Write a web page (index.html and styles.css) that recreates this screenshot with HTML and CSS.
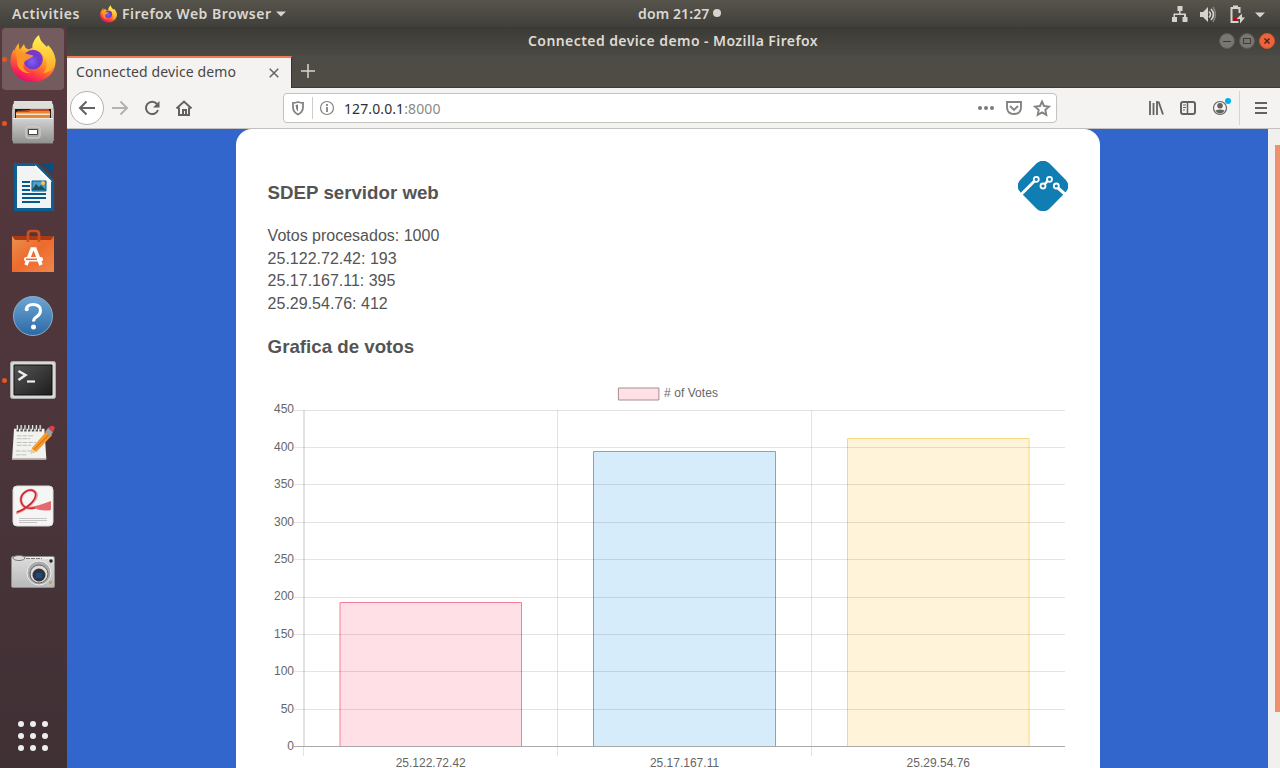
FILE: index.html
```html
<!DOCTYPE html>
<html lang="es">
<head>
<meta charset="utf-8">
<title>Connected device demo</title>
<link rel="stylesheet" href="styles.css">
</head>
<body>
<svg class="defs" width="0" height="0">
  <defs>
    <linearGradient id="fxbody" x1=".8" y1="0" x2=".25" y2="1"><stop offset="0" stop-color="#fff44f"/><stop offset=".3" stop-color="#ffbd27"/><stop offset=".58" stop-color="#ff6a2c"/><stop offset=".82" stop-color="#fa2751"/><stop offset="1" stop-color="#df0080"/></linearGradient>
    <radialGradient id="fxglobe" cx=".45" cy=".6" r=".65"><stop offset="0" stop-color="#8758ff"/><stop offset=".55" stop-color="#6540cd"/><stop offset="1" stop-color="#9b2bc4"/></radialGradient>
    <linearGradient id="fxtail" x1="0" y1="0" x2="0" y2="1"><stop offset="0" stop-color="#fff44f"/><stop offset="1" stop-color="#ffa52a"/></linearGradient>
    <linearGradient id="metal" x1="0" y1="0" x2="0" y2="1"><stop offset="0" stop-color="#d4d3d1"/><stop offset="1" stop-color="#8f8f8d"/></linearGradient>
    <linearGradient id="orange" x1="0" y1="0" x2="1" y2="1"><stop offset="0" stop-color="#e8914f"/><stop offset=".5" stop-color="#ee6a2c"/><stop offset="1" stop-color="#f0874f"/></linearGradient>
    <linearGradient id="help" x1="0" y1="0" x2="0" y2="1"><stop offset="0" stop-color="#6da7d5"/><stop offset="1" stop-color="#2c68a4"/></linearGradient>
    <linearGradient id="term" x1="0" y1="0" x2="1" y2="1"><stop offset="0" stop-color="#555"/><stop offset="1" stop-color="#1d1d1d"/></linearGradient>
    <linearGradient id="cam" x1="0" y1="0" x2="0" y2="1"><stop offset="0" stop-color="#ddd"/><stop offset="1" stop-color="#b9b9b9"/></linearGradient>
    <symbol id="firefox" viewBox="0 0 46 48">
      <path d="M9 8c-.5 3 0 5 1 6.500l4-5.500c.5 3 2 5 5 5.500 2-1.500 4-2 6-2 6-1 13 0 18 6 2 3 3 6 2.500 9C45 39 35 47 23 47 10 47 .5 38 .5 26c0-5 1.500-9 3.500-12l.5 2C5 13 6.500 11 9 8z" fill="url(#fxbody)"/>
      <path d="M29 0c1 6 4 8 8 12l1-2c6 6 8 12 7 18-2 7-7 10-12 10 4-4 5-10 2-15-2-4-6-7-12-8-2-5 1-11 6-15z" fill="url(#fxtail)"/>
      <circle cx="23" cy="24.500" r="9.800" fill="url(#fxglobe)"/>
      <path d="M6 17c5-1 9 2 15 3 2 0 3 1 1 2l-5 3c-2 1-3 2-3 4-2 5 2 8 7 9-8 1-14-4-14-12 0-4-1-6-1-9z" fill="#ff9727" opacity=".95"/>
    </symbol>
  </defs>
</svg>
<header class="topbar">
  <span class="activities">Activities</span>
  <svg class="topfox" width="17" height="18"><use href="#firefox"/></svg>
  <span class="appname">Firefox Web Browser</span>
  <svg class="caret" width="10" height="6"><path d="M0 .5h10L5 5.500z" fill="#d5d3cf"/></svg>
  <span class="clock">dom 21:27</span><i class="notice"></i>
  <svg class="tray" width="100" height="24" viewBox="0 0 100 24">
    <g fill="#d5d3cf">
      <path d="M10.500 4h5v5h-2v2.500h5.500v3.500h1.500v5h-5v-5h1.500v-2H8v2h2v5H5v-5h1.500v-3.500H12V9h-1.500z"/>
      <path d="M33 10h3l5-5v15l-5-5h-3z"/>
      <path d="M42 9.500q3 3 0 6M44 7q5 5.500 0 11" fill="none" stroke="#d5d3cf" stroke-width="1.600"/>
      <path d="M46 5q5 7.500 0 15" fill="none" stroke="#85837d" stroke-width="1.500"/>
      <path d="M63.500 5h2.500V3.500h5V5h2.500v6h-2V7h-6v12h6v2h-8z"/>
      <path d="M66.500 16h4v2.500h-4z" fill="#d00000"/>
      <path d="M75 11.500l-5.500 5.500h3.500v4.500l5-6h-3z"/>
      <path d="M88 10.500h10l-5 5z"/>
    </g>
  </svg>
</header>
<div class="workspace">
  <nav class="dock">
    <div class="app active running"><svg width="46" height="48"><use href="#firefox"/></svg></div>
    <div class="app running"><svg width="44" height="46" viewBox="0 0 44 46">
      <path d="M2 4h40l1 7v30H1V11z" fill="url(#metal)"/><path d="M3 1h38l1 7H2z" fill="#dededb"/><path d="M4 9h36v9H4z" fill="#2b1a14"/><path d="M6 11l12-1 2-1h18v4H6z" fill="#c6481a"/><path d="M5 12h13l1-1h20v7H5z" fill="#e88436"/><path d="M5 13.500h34V15H5z" fill="#fce1be"/>
      <path d="M2 18h40v26H2z" fill="url(#metal)"/><path d="M2 18.500h40" stroke="#eee"/><rect x="15" y="27" width="14" height="11" rx="2" fill="#aaa" stroke="#d7d7d7"/><path d="M17.500 29.500h9v5h-9z" fill="#fff" stroke="#444"/><path d="M2 43.500h40" stroke="#666"/>
    </svg></div>
    <div class="app"><svg width="41" height="48" viewBox="0 0 41 48">
      <path d="M1 0h23l17 17v31H1z" fill="#0b5f92"/><path d="M28 0h13v12z" fill="#045083"/><path d="M4 3h18l16 15v27H4z" fill="#f2f3f3"/><path d="M22 3l16 16" stroke="#fff" stroke-width="2"/>
      <path d="M9 19h8m-8 4h8m-8 4h8m-8 4h24m-24 4h24m-24 4h18" stroke="#045b8b" stroke-width="2"/><path d="M19 18h14v10H19z" fill="#4aa0cf" stroke="#045b8b"/><path d="M19 27l4-6 3 3 2-2 5 5z" fill="#244f50"/><circle cx="30" cy="20" r="2" fill="#fbc43a"/>
    </svg></div>
    <div class="app"><svg width="42" height="44" viewBox="0 0 42 44">
      <path d="M0 7h42v5H0z" fill="#a83a14"/><path d="M0 7l3 4h36l3-4v36H0z" fill="url(#orange)"/><path d="M16 13V5q0-3 3-3h5q3 0 3 3v8" fill="none" stroke="#d04f1f" stroke-width="2.700"/>
      <path d="M14 36l6-16h3l6 16" fill="none" stroke="#fff" stroke-width="3.600"/><rect x="12" y="28" width="19" height="4.500" rx="2.200" fill="#fff"/><path d="M14 30.300h11" stroke="#ed6c2c" stroke-width="1.600"/>
    </svg></div>
    <div class="app low"><svg width="42" height="42" viewBox="0 0 42 42">
      <circle cx="21" cy="21" r="19.500" fill="url(#help)" stroke="#8badc9"/><path d="M14.500 14.500q0-5 6.500-5 7.500 0 7.500 6 0 3.500-3.500 6-3.500 2-3.500 5" fill="none" stroke="#fff" stroke-width="3"/><circle cx="14.700" cy="14.300" r="2" fill="#fff"/><circle cx="21.500" cy="32" r="2.500" fill="#fff"/>
    </svg></div>
    <div class="app running low"><svg width="46" height="38" viewBox="0 0 46 38">
      <rect x=".5" y=".5" width="45" height="37" rx="2" fill="#d8d8d6" stroke="#aaa"/><path d="M4 4h38v30H4z" fill="url(#term)" stroke="#111"/><path d="M8.500 10l7 4-7 5" fill="none" stroke="#eee" stroke-width="2.500"/><path d="M17 20.500h8" stroke="#eee" stroke-width="2.200"/>
    </svg></div>
    <div class="app high"><svg width="46" height="38" viewBox="0 0 46 40">
      <path d="M3 6h32l2 32H1z" fill="#f2f2ef"/><path d="M1 37h36v2H1z" fill="#aaa99f"/><path d="M7 3v6m4-6v6m4-6v6m4-6v6m4-6v6m4-6v6m4-6v6" stroke="#555" stroke-width="2.500"/><path d="M6.500 2v5m4-5v5m4-5v5m4-5v5m4-5v5m4-5v5m4-5v5" stroke="#e8e8e8" stroke-width="1.300"/>
      <path d="M6 13.500h18M6 16.500h14M6 20.500h20M6 23.500h15M5 29.500h17M5 33.500h12" stroke="#bbb" stroke-dasharray="5 1"/><path d="M22 26L38 8l5 5-16 17-6 2z" fill="#f79b31"/><path d="M24 28L41 11" stroke="#d8791d" stroke-width="1.300"/><path d="M22 27l4 3-6 2.500z" fill="#e9cda1"/><path d="M36 9l3-4 5 5-3 4z" fill="#9aa3a9"/><path d="M39 5q5-4 7 0l-2 5z" fill="#e33d49"/>
    </svg></div>
    <div class="app high"><svg width="42" height="42" viewBox="0 0 42 42">
      <rect x="1" y="1" width="40" height="40" rx="4" fill="#f5f5f5" stroke="#dcdcdc"/><path d="M19 22q10-2 20-6v9q-9 2-20-3z" fill="#e56a6f"/><path d="M4 28C14 25 27 14 24 8 19 1 8 8 9 16c1 6 6 8 12 7" fill="none" stroke="#e9969a" stroke-width="2.800"/><path d="M5 27C15 24 26 14 23 7 18 2 8 8 9 16c1 6 6 8 14 7" fill="none" stroke="#cb242c" stroke-width="1.500"/><path d="M7 33.500h28M7 35.500h28M7 37.500h18" stroke="#c4c4c4" stroke-width="1"/>
    </svg></div>
    <div class="app"><svg width="44" height="34" viewBox="0 0 44 34">
      <rect x=".5" y="2.500" width="43" height="31" rx="1.500" fill="url(#cam)" stroke="#8d8d8d"/><path d="M2 4h40" stroke="#eee" stroke-width="2"/><ellipse cx="8" cy="4" rx="6" ry="2.500" fill="#ddd" stroke="#777"/><path d="M15 4.500h16" fill="none" stroke="#777" stroke-dasharray="4 1"/><circle cx="28" cy="19" r="12" fill="#aaa" stroke="#eee"/><circle cx="28" cy="20" r="9" fill="#ddd" stroke="#666"/><circle cx="28" cy="21" r="6.500" fill="#303338"/><path d="M25 19h6v5h-6z" fill="#154b95"/><circle cx="40" cy="7" r="1.700" fill="#222"/><path d="M38 27h3v3h-3z" fill="#f09b21"/>
    </svg></div>
    <div class="allapps"><i></i><i></i><i></i><i></i><i></i><i></i><i></i><i></i><i></i></div>
  </nav>
  <section class="window">
    <div class="titlebar">
      <span class="wtitle">Connected device demo - Mozilla Firefox</span>
      <div class="controls">
        <svg width="16" height="16"><circle cx="8" cy="8" r="7.500" fill="#787771" stroke="#5b5a55"/><path d="M4 8.500h8" stroke="#3b3a36"/></svg>
        <svg width="16" height="16"><circle cx="8" cy="8" r="7.500" fill="#787771" stroke="#5b5a55"/><path d="M4.500 5.500h7v5h-7z" fill="none" stroke="#3b3a36"/></svg>
        <svg width="16" height="16"><circle cx="8" cy="8" r="7.500" fill="#ed633b" stroke="#d9542a"/><path d="M5.500 5.500l5 5m0-5l-5 5" stroke="#4a2013" stroke-width="1.400"/></svg>
      </div>
    </div>
    <div class="tabs">
      <div class="tab"><span>Connected device demo</span><svg width="10" height="10"><path d="M.7.7l8.600 8.600m0-8.600L.7 9.300" stroke="#666360" stroke-width="1.500"/></svg></div>
      <svg class="newtab" width="14" height="14"><path d="M7 0v14M0 7h14" stroke="#d8d5cd" stroke-width="1.500"/></svg>
    </div>
    <div class="toolbar">
      <svg width="212" height="40" viewBox="67 88 212 40" fill="none" stroke="#64625f" stroke-width="2">
        <circle cx="87" cy="108" r="16.500" fill="#fff" stroke="#b5b2ae" stroke-width="1"/>
        <path d="M95 108H80m6.500-6.500L80 108l6.500 6.500"/><path d="M112 108h15m-6.500-6.500l6.500 6.500-6.500 6.500" stroke="#b4b2af"/>
        <path d="M157 104a6.200 6.200 0 1 0 1 6"/><path d="M159.500 101v6.500H153z" fill="#64625f" stroke="none"/>
        <path d="M176.500 108.500l7.500-7 7.500 7M179 107.500v7.500h10v-7.500"/><path d="M183 115v-5h3v5"/>
      </svg>
      <div class="url">
        <svg width="52" height="28" viewBox="284 94 52 28" fill="none" stroke="#858381" stroke-width="1.800">
          <path d="M298 102q3 1 5 1v4q0 5-5 7.500-5-2.500-5-7.500v-4q2 0 5-1z"/><path d="M298 104.500v7q-2-1.500-2.400-6.500z" fill="#7c7a77" stroke="none"/>
          <path d="M312.500 97v22" stroke="#cfccc8" stroke-width="1"/><circle cx="327" cy="108" r="6.500" stroke-width="1.200"/><path d="M327 104v2m0 1v5"/>
        </svg>
        <span class="host">127.0.0.1<span class="port">:8000</span></span>
        <svg class="urlicons" width="80" height="28" viewBox="976 94 80 28" fill="none" stroke="#858381" stroke-width="1.900">
          <g fill="#7c7a77" stroke="none"><circle cx="980" cy="108" r="2"/><circle cx="986" cy="108" r="2"/><circle cx="992" cy="108" r="2"/></g>
          <path d="M1007 102h14v5q0 7-7 7t-7-7z"/><path d="M1010 106l4 4 4-4"/>
          <path d="M1042 101.500l2 4.500 5 .6-3.700 3.300 1 5-4.300-2.500-4.300 2.500 1-5-3.700-3.300 5-.6z"/>
        </svg>
      </div>
      <svg class="tools" width="134" height="40" viewBox="1146 88 134 40" fill="none" stroke="#64625f" stroke-width="2">
        <path d="M1150 101v14m3.500-12v12m3.500-14v14m1.500-13.500l4.500 13" stroke-width="1.800"/><rect x="1181" y="102" width="14" height="12" rx="2"/><path d="M1187.500 102v12" stroke-width="1.500"/><path d="M1183 105h3m-3 2.500h3m-3 2.500h2" stroke-width="1"/>
        <circle cx="1220" cy="108" r="6.500" stroke-width="1.200"/><circle cx="1220" cy="105.700" r="2.800" fill="#64625f" stroke="none"/><path d="M1215.500 110.500q4.500-2 9 0-1.500 3-4.500 3t-4.500-3z" fill="#64625f" stroke="none"/><circle cx="1228" cy="101" r="3" fill="#00aef5" stroke="none"/>
        <path d="M1239.500 91v34" stroke="#d7d4d0" stroke-width="1"/><path d="M1255 103h12m-12 5h12m-12 5h12"/>
      </svg>
    </div>
    <div class="viewport">
      <main class="card">
        <svg class="logo" width="50" height="50" viewBox="0 0 50 50"><rect x="4.500" y="4.500" width="41" height="41" rx="9" transform="rotate(45 25 25)" fill="#107eb2"/><g fill="none" stroke="#fff"><path d="M3.500 33L16.500 20M40 27l8 7" stroke-width="3"/><path d="M26.500 23.500l3.500-4" stroke-width="2.500"/><g stroke-width="1.800" fill="#107eb2"><circle cx="18.300" cy="18.300" r="2.500"/><circle cx="31.500" cy="18.300" r="2.500"/><circle cx="25" cy="25" r="2.500"/><circle cx="38.300" cy="25" r="2.500"/></g></g></svg>
        <h3>SDEP servidor web</h3>
        <p>Votos procesados: 1000<br>25.122.72.42: 193<br>25.17.167.11: 395<br>25.29.54.76: 412</p>
        <h3 class="second">Grafica de votos</h3>
        <svg class="chart" width="800" height="400" viewBox="267.600 378 800 400">
          <path d="M618 388h40.500v12H618z" fill="#ffe0e6" stroke="#a58d91"/><text x="663.600" y="397" textLength="54">#&nbsp;of&nbsp;Votes</text>
          <g transform="translate(-.4 0)">
          <path d="M340 746V602.500h181.500V746" fill="rgba(255,99,132,.2)" stroke="#f37e97"/>
          <path d="M593.500 746V451.500h182V746" fill="rgba(54,162,235,.2)" stroke="#5fb0e6"/>
          <path d="M847.500 746V438.500H1029V746" fill="rgba(255,196,70,.2)" stroke="#fbd77c"/>
          <g stroke="#000" stroke-opacity=".11" fill="none"><path d="M294 410.500h771M294 447.500h771M294 484.500h771M294 522.500h771M294 559.500h771M294 597.500h771M294 634.500h771M294 671.500h771M294 709.500h771M303.500 410v346M557.500 410v346M811.500 410v346"/><path d="M304.500 410v336"/></g>
          <path d="M294 746.500h771" stroke="#aaa"/>
          <g text-anchor="end"><text x="294" y="413">450</text><text x="294" y="451">400</text><text x="294" y="488">350</text><text x="294" y="526">300</text><text x="294" y="563">250</text><text x="294" y="600">200</text><text x="294" y="638">150</text><text x="294" y="675">100</text><text x="294" y="713">50</text><text x="294" y="750">0</text></g>
          <g text-anchor="middle"><text x="430.700" y="767">25.122.72.42</text><text x="684.500" y="767">25.17.167.11</text><text x="938.300" y="767">25.29.54.76</text></g>
          </g>
        </svg>
      </main>
      <div class="scroll"><i></i></div>
    </div>
  </section>
</div>
</body>
</html>
```
FILE: styles.css
```css
* { box-sizing: border-box; }
body { margin: 0; width: 1280px; height: 768px; overflow: hidden; font-family: "Noto Sans", sans-serif; font-size: 14px; }
svg { display: block; flex: none; }
.defs { position: absolute; }
.topbar { height: 27px; display: flex; align-items: center; padding-left: 12px; background: linear-gradient(#57544c, #403f3a); color: #dbd8d2; font-weight: 600; white-space: nowrap; }
.activities, .appname, .clock { padding-bottom: 1px; }
.activities { width: 88px; letter-spacing: .55px; }
.topfox { margin-right: 5px; }
.appname { width: 154px; letter-spacing: .48px; }
.clock { margin-left: 352px; width: 75px; letter-spacing: .12px; }
.notice { width: 8px; height: 8px; border-radius: 50%; background: #d5d3cf; margin-bottom: 1px; }
.tray { margin-left: auto; margin-right: 13px; }
.workspace { display: flex; height: 741px; }
.dock { width: 67px; flex: none; display: flex; flex-direction: column; background: linear-gradient(#57393d, #4b353b 55%, #3f3034); }
.app { height: 64px; flex: none; display: flex; align-items: center; justify-content: center; position: relative; margin-right: 1px; }
.app.active { height: 62px; width: 62px; margin: 1px 0 1px 2px; border-radius: 4px; background: #735b5e; }
.app.low { padding-top: 2px; }
.app.high { padding-bottom: 2px; }
.running::before { content: ""; position: absolute; left: 2px; width: 5px; height: 5px; border-radius: 50%; background: #e95420; }
.active::before { left: 0; }
.allapps { margin: auto auto 17px 18px; display: grid; grid-template-columns: repeat(3, 6px); gap: 6px; }
.allapps i { height: 6px; border-radius: 50%; background: #eee; }
.window { flex: 1; min-width: 0; display: flex; flex-direction: column; }
.titlebar { height: 28px; display: flex; align-items: center; background: linear-gradient(#3b3a36, #4b4943); color: #dfdbd2; font-weight: 600; white-space: nowrap; }
.wtitle { margin-left: 461px; padding-bottom: 2px; letter-spacing: .42px; }
.controls { margin-left: auto; display: flex; gap: 4px; margin-right: 5px; }
.tabs { height: 33px; display: flex; align-items: center; background: linear-gradient(#4d4b45, #504d46); border-bottom: 1px solid #3b3a36; }
.tab { align-self: stretch; width: 225px; margin: 1px 0 -1px; border-top: 2px solid #f17c50; border-right: 1px solid #34332f; background: #f4f3f2; padding: 0 12px 1px 9px; display: flex; align-items: center; justify-content: space-between; color: #494744; white-space: nowrap; }
.tab span { padding-bottom: 2px; letter-spacing: .11px; }
.newtab { margin-left: 9px; }
.toolbar { height: 41px; display: flex; background: #f4f3f2; border-bottom: 1px solid #c5c1be; }
.url { width: 774px; height: 30px; margin: 5px 0 0 4px; border: 1px solid #c4c2bf; border-radius: 4px; background: #fff; display: flex; align-items: center; }
.host { margin-left: 8px; color: #303030; letter-spacing: .1px; }
.port { color: #8a8a8a; }
.urlicons { margin-left: auto; }
.tools { margin-left: auto; }
.viewport { flex: 1; min-height: 0; display: flex; background: #36c; overflow: hidden; }
.card { width: 864px; height: 700px; margin-left: 169px; padding: 51px 32px 0 31.6px; border-radius: 16px 16px 0 0; background: #fff; position: relative; color: #545454; font-family: "Liberation Sans", Arial, sans-serif; font-size: 16px; }
.logo { position: absolute; right: 32px; top: 32px; }
.card h3 { margin: 0; font-size: 18.72px; line-height: 26px; }
.card p { margin: 19px 0; line-height: 22.5px; }
.chart { margin-top: 18px; font-size: 12px; }
.chart text { fill: #666; }
.scroll { width: 12px; margin-left: auto; background: #f1f0ef; padding: 16px 0 0 7px; }
.scroll i { display: block; height: 567px; background: #f08f6b; }
```
